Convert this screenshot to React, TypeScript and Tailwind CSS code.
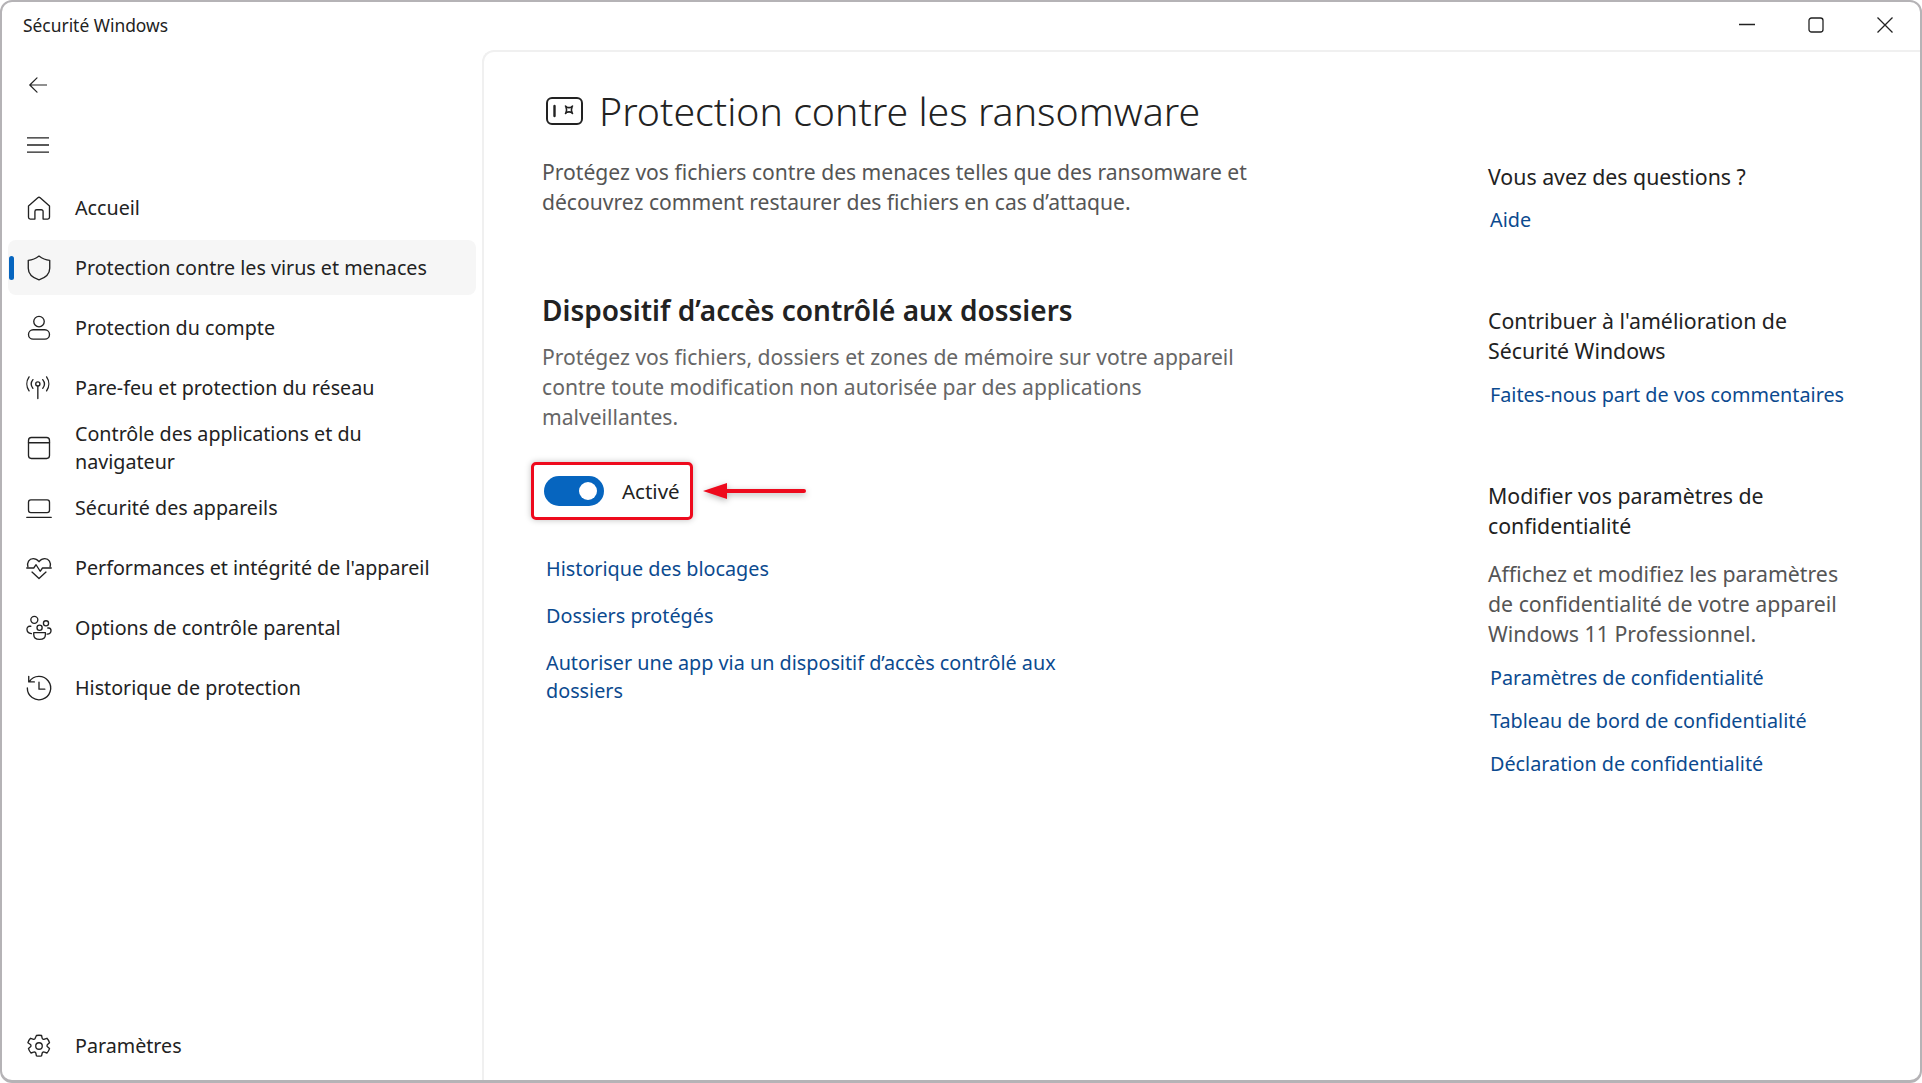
import { ComponentType } from "react";

const stroke = {
  fill: "none",
  stroke: "currentColor",
  strokeWidth: 1.15,
  strokeLinecap: "round" as const,
  strokeLinejoin: "round" as const,
};

function HomeIcon() {
  return (
    <svg viewBox="0 0 24 24" className="h-7 w-7" {...stroke}>
      <path d="M3 10.200 11 3.200a1.500 1.500 0 0 1 2 0l8 7V20a1.500 1.500 0 0 1-1.500 1.500H15.500V15a1.500 1.500 0 0 0-1.500-1.500h-4A1.500 1.500 0 0 0 8.500 15v6.500H4.500A1.500 1.500 0 0 1 3 20Z" />
    </svg>
  );
}

function ShieldIcon() {
  return (
    <svg viewBox="0 0 24 24" className="h-7 w-7" {...stroke}>
      <path d="M12 1.800c3 2.400 5.700 3.400 9.200 3.600v6.800c0 4.500-3 7.900-9.200 10-6.200-2.100-9.200-5.500-9.200-10V5.400C6.300 5.200 9 4.200 12 1.800Z" />
    </svg>
  );
}

function PersonIcon() {
  return (
    <svg viewBox="0 0 24 24" className="h-7 w-7" {...stroke}>
      <circle cx="12" cy="6.500" r="4.500" />
      <rect x="3" y="13.500" width="18" height="8" rx="4" />
    </svg>
  );
}

function AntennaIcon() {
  return (
    <svg viewBox="0 0 24 24" className="h-7 w-7" {...stroke}>
      <circle cx="11" cy="8.500" r="1.800" />
      <path d="M11 10.500V21M6.800 4.800a6 6 0 0 0 0 7.500M15.200 4.800a6 6 0 0 1 0 7.500M3.500 2.500a10.500 10.500 0 0 0 0 12M18.500 2.500a10.500 10.500 0 0 1 0 12" />
    </svg>
  );
}

function WindowIcon() {
  return (
    <svg viewBox="0 0 24 24" className="h-7 w-7" {...stroke}>
      <rect x="3" y="3" width="18" height="18" rx="2.500" />
      <path d="M3 7.500h18" />
    </svg>
  );
}

function LaptopIcon() {
  return (
    <svg viewBox="0 0 24 24" className="h-7 w-7" {...stroke}>
      <rect x="3" y="5" width="18" height="11" rx="2" />
      <path d="M1.500 20h21" />
    </svg>
  );
}

function HeartIcon() {
  return (
    <svg viewBox="0 0 24 24" className="h-7 w-7" {...stroke}>
      <path d="M2.500 11C1.500 7.500 3.500 4 7 4c2 0 3.700 1 5 2.600C13.300 5 15 4 17 4c3.500 0 5.500 3.500 4.500 7" />
      <path d="M1.500 12h6l2-2.800 3.500 5.600 2-2.800h7.500" />
      <path d="m6 15.500 6 5.500 6-5.500" />
    </svg>
  );
}

function FamilyIcon() {
  return (
    <svg viewBox="0 0 24 24" className="h-7 w-7" {...stroke}>
      <circle cx="8" cy="5" r="3" />
      <circle cx="18" cy="8" r="2.200" />
      <circle cx="12.500" cy="11.800" r="2.200" />
      <path d="M5 10.500H4a2.300 2.300 0 0 0-2.300 2.500c0 2 1.500 3.400 3.800 3.800M19.500 12h.8a2.300 2.300 0 0 1 2 2.300c0 1.600-1.200 2.700-3.300 3" />
      <path d="M7.500 16h10v1.500c0 2.600-2 4.300-5 4.300s-5-1.700-5-4.300Z" />
    </svg>
  );
}

function HistoryIcon() {
  return (
    <svg viewBox="0 0 24 24" className="h-7 w-7" {...stroke}>
      <path d="M3.700 6.500A10 10 0 1 1 2 12M3.200 2v4.800H8" />
      <path d="M12 7v6h5" />
    </svg>
  );
}

function GearIcon() {
  return (
    <svg viewBox="0 0 24 24" className="h-7 w-7" {...stroke}>
      <circle cx="12" cy="12" r="2.800" />
      <path d="M9.800 3a10 10 0 0 1 4.400 0l.5 2.200a1.400 1.400 0 0 0 2 .9l2.100-.7a9 9 0 0 1 2.200 3.800l-1.700 1.500a1.400 1.400 0 0 0 0 2l1.700 1.500a9 9 0 0 1-2.200 3.800l-2.100-.7a1.400 1.400 0 0 0-2 .9l-.5 2.200a10 10 0 0 1-4.400 0l-.5-2.200a1.400 1.400 0 0 0-2-.9l-2.100.7a9 9 0 0 1-2.200-3.800l1.700-1.500a1.400 1.400 0 0 0 0-2L2.500 9.200a9 9 0 0 1 2.200-3.800l2.100.7a1.400 1.400 0 0 0 2-.9Z" />
    </svg>
  );
}

function RansomIcon() {
  return (
    <svg viewBox="0 0 37 28" className="h-7 w-[37px]" fill="none" stroke="currentColor" strokeWidth="2" strokeLinecap="round" strokeLinejoin="round">
      <rect x="1" y="1" width="35" height="26" rx="5" />
      <path d="M8.500 9v10" strokeWidth="2.400" />
      <path d="M20 10c2 .8 4 .8 6 0-.8 2-.8 3.500 0 5.500-2-.8-4-.8-6 0 .8-2 .8-3.500 0-5.500Z" strokeWidth="1.600" />
      <path d="m19.500 9 1 1M26.500 9l-1 1M19.500 16.500l1-1M26.500 16.500l-1-1" strokeWidth="1.600" />
    </svg>
  );
}

interface NavItem {
  label: string;
  icon: ComponentType;
  active?: boolean;
}

const navItems: NavItem[] = [
  { label: "Accueil", icon: HomeIcon },
  { label: "Protection contre les virus et menaces", icon: ShieldIcon, active: true },
  { label: "Protection du compte", icon: PersonIcon },
  { label: "Pare-feu et protection du réseau", icon: AntennaIcon },
  { label: "Contrôle des applications et du navigateur", icon: WindowIcon },
  { label: "Sécurité des appareils", icon: LaptopIcon },
  { label: "Performances et intégrité de l'appareil", icon: HeartIcon },
  { label: "Options de contrôle parental", icon: FamilyIcon },
  { label: "Historique de protection", icon: HistoryIcon },
];

function NavRow({ item }: { item: NavItem }) {
  const Icon = item.icon;
  return (
    <div
      className={`relative flex min-h-[55px] items-center rounded-lg pl-[17px] ${
        item.active ? "bg-[#f6f6f6]" : ""
      }`}
    >
      {item.active && (
        <span className="absolute left-[1px] top-[16px] h-[24px] w-[5px] rounded-full bg-[#0665bf]" />
      )}
      <span className="mr-[22px] flex w-7 shrink-0 justify-center text-[#222]">
        <Icon />
      </span>
      <span className="max-w-[370px] text-[19.7px] leading-[27.5px] text-[#222]">{item.label}</span>
    </div>
  );
}

function DocLink({ children, className = "" }: { children: string; className?: string }) {
  return <a className={`block text-[19.8px] leading-[28px] text-[#0b4a8f] ${className}`}>{children}</a>;
}

export default function App() {
  return (
    <div className="flex h-[1083px] w-[1922px] flex-col overflow-hidden rounded-xl border-2 border-b-[3px] border-[#b5b3b6] bg-white font-['Noto_Sans',sans-serif]">
      <header className="flex h-[48px] shrink-0 items-center justify-between pb-[2px] pl-[21px]">
        <span className="text-[17.4px] text-[#222]">Sécurité Windows</span>
        <div className="flex items-center pr-[1px] text-[#222]">
          <span className="flex w-[69px] justify-center">
            <svg viewBox="0 0 16 16" className="h-4 w-4" fill="none" stroke="currentColor" strokeWidth="1.300">
              <path d="M0 7.500h16" />
            </svg>
          </span>
          <span className="flex w-[69px] justify-center">
            <svg viewBox="0 0 16 16" className="h-4 w-4" fill="none" stroke="currentColor" strokeWidth="1.300">
              <rect x="1" y="1" width="14" height="14" rx="2.500" />
            </svg>
          </span>
          <span className="flex w-[69px] justify-center">
            <svg viewBox="0 0 16 16" className="h-4 w-4" fill="none" stroke="currentColor" strokeWidth="1.300">
              <path d="m.5.500 15 15M15.500.500l-15 15" />
            </svg>
          </span>
        </div>
      </header>

      <div className="flex min-h-0 flex-1">
        <aside className="flex w-[480px] shrink-0 flex-col pl-[6px] pr-[6px]">
          <div className="flex h-[70px] items-center pl-[21px] text-[#222]">
            <svg viewBox="0 0 18 16" className="h-4 w-[18px]" fill="none" stroke="currentColor" strokeWidth="1.200" strokeLinecap="round" strokeLinejoin="round">
              <path d="M17.500 8H.8M8 .8.800 8 8 15.200" />
            </svg>
          </div>
          <div className="flex h-[50px] items-center pl-[19px] text-[#222]">
            <svg viewBox="0 0 22 16" className="h-4 w-[22px]" fill="none" stroke="currentColor" strokeWidth="1.300">
              <path d="M0 .8h22M0 8h22M0 15.200h22" />
            </svg>
          </div>
          <nav className="mt-[10px] flex flex-col gap-[5px]">
            {navItems.map((item) => (
              <NavRow key={item.label} item={item} />
            ))}
          </nav>
          <div className="mt-auto mb-[7px]">
            <NavRow item={{ label: "Paramètres", icon: GearIcon }} />
          </div>
        </aside>

        <main className="flex min-w-0 flex-1 rounded-tl-xl border-l-2 border-t-2 border-[#f0f0f0] pl-[58px]">
          <section className="w-[1000px] shrink-0 pt-[31px]">
            <div className="flex items-center gap-[16px] pl-[4px]">
              <span className="text-[#222]">
                <RansomIcon />
              </span>
              <h1 className="text-[39.300px] leading-[56px] font-light text-[#222]">
                Protection contre les ransomware
              </h1>
            </div>
            <p className="mt-[18px] w-[725px] text-[21.100px] leading-[30px] text-[#555]">
              Protégez vos fichiers contre des menaces telles que des ransomware et découvrez comment restaurer des fichiers en cas d’attaque.
            </p>
            <h2 className="mt-[74px] text-[28px] leading-[38px] font-semibold text-[#222]">
              Dispositif d’accès contrôlé aux dossiers
            </h2>
            <p className="mt-[13px] w-[725px] text-[21.100px] leading-[30px] text-[#666]">
              Protégez vos fichiers, dossiers et zones de mémoire sur votre appareil contre toute modification non autorisée par des applications malveillantes.
            </p>

            <div className="mt-[30px] flex items-center">
              <div className="-ml-[11px] flex h-[58px] w-[162px] items-center rounded-[5px] border-[3px] border-[#ee0a1d] pl-[10px] shadow-[0_0_6px_rgba(0,0,0,0.25)]">
                <span className="flex h-[30px] w-[60px] items-center justify-end rounded-full bg-[#0665bf] pr-[7px]">
                  <span className="h-[18px] w-[18px] rounded-full bg-white" />
                </span>
                <span className="ml-[18px] text-[20.500px] text-[#222]">Activé</span>
              </div>
              <svg viewBox="0 0 104 20" className="ml-[9px] h-5 w-[104px] drop-shadow-[0_2px_3px_rgba(0,0,0,0.3)]">
                <path d="M24 10h78" stroke="#ee0a1d" strokeWidth="4" strokeLinecap="round" />
                <path d="M1 10 25 2v16Z" fill="#ee0a1d" />
              </svg>
            </div>

            <div className="mt-[35px] flex flex-col gap-[19px] pl-[4px]">
              <DocLink>Historique des blocages</DocLink>
              <DocLink>Dossiers protégés</DocLink>
              <DocLink className="w-[530px]">Autoriser une app via un dispositif d’accès contrôlé aux dossiers</DocLink>
            </div>
          </section>

          <section className="ml-[-54px] w-[390px] shrink-0 pt-[110px]">
            <h3 className="w-[360px] text-[21.300px] leading-[30px] text-[#222]">Vous avez des questions ?</h3>
            <DocLink className="mt-[14px] ml-[2px]">Aide</DocLink>

            <h3 className="mt-[72px] w-[360px] text-[21.300px] leading-[30px] text-[#222]">
              Contribuer à l'amélioration de Sécurité Windows
            </h3>
            <DocLink className="mt-[15px] ml-[2px]">Faites-nous part de vos commentaires</DocLink>

            <h3 className="mt-[72px] w-[360px] text-[21.300px] leading-[30px] text-[#222]">
              Modifier vos paramètres de confidentialité
            </h3>
            <p className="mt-[18px] w-[360px] text-[21.300px] leading-[30px] text-[#555]">
              Affichez et modifiez les paramètres de confidentialité de votre appareil Windows 11 Professionnel.
            </p>
            <div className="mt-[15px] ml-[2px] flex flex-col gap-[15px]">
              <DocLink>Paramètres de confidentialité</DocLink>
              <DocLink>Tableau de bord de confidentialité</DocLink>
              <DocLink>Déclaration de confidentialité</DocLink>
            </div>
          </section>
        </main>
      </div>
    </div>
  );
}
